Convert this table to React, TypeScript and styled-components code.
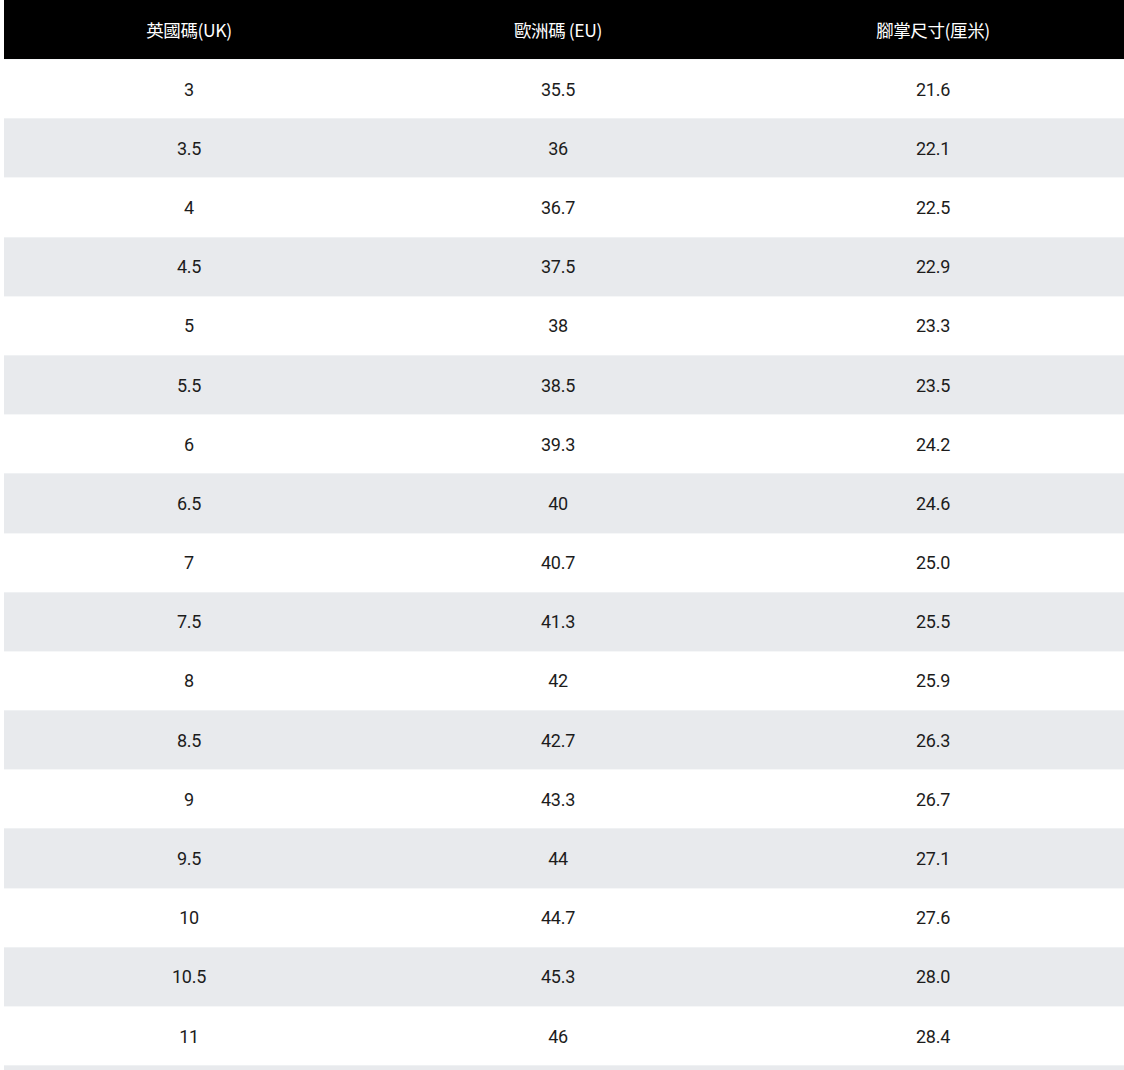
import React from "react";
import styled, { createGlobalStyle } from "styled-components";

const Global = createGlobalStyle`
  html, body { margin: 0; padding: 0; background: #ffffff; }
  body { font-family: Roboto, "Noto Sans CJK TC", "Noto Sans", sans-serif; }
`;

const Page = styled.div`
  padding-left: 4px;
  width: 1120px;
  height: 1070px;
  overflow: hidden;
`;

const Table = styled.div`
  display: flex;
  flex-direction: column;
`;

const HeaderRow = styled.div`
  display: grid;
  grid-template-columns: 370px 368px 1fr;
  height: 59px;
  background: #000000;
  color: #ffffff;
  align-items: center;
`;

const HeaderCell = styled.div`
  text-align: center;
  font-family: "Noto Sans CJK TC", "Noto Sans CJK SC", Roboto, sans-serif;
  font-size: 17.5px;
  font-weight: 400;
  letter-spacing: -0.4px;
  padding-bottom: 1px;
`;

const Row = styled.div<{ $shade: boolean }>`
  display: grid;
  grid-template-columns: 370px 368px 1fr;
  height: 59.2px;
  align-items: center;
  background: ${(p) => (p.$shade ? "#e8eaed" : "#ffffff")};
  border-top: 1px solid ${(p) => (p.$shade ? "#eff1f3" : "#f6f7f8")};
  box-sizing: border-box;
`;

const Cell = styled.div`
  text-align: center;
  font-family: Roboto, "Noto Sans", sans-serif;
  font-size: 18px;
  color: #1c1c1c;
  letter-spacing: -0.3px;
`;

const rows: [string, string, string][] = [
  ["3", "35.5", "21.6"],
  ["3.5", "36", "22.1"],
  ["4", "36.7", "22.5"],
  ["4.5", "37.5", "22.9"],
  ["5", "38", "23.3"],
  ["5.5", "38.5", "23.5"],
  ["6", "39.3", "24.2"],
  ["6.5", "40", "24.6"],
  ["7", "40.7", "25.0"],
  ["7.5", "41.3", "25.5"],
  ["8", "42", "25.9"],
  ["8.5", "42.7", "26.3"],
  ["9", "43.3", "26.7"],
  ["9.5", "44", "27.1"],
  ["10", "44.7", "27.6"],
  ["10.5", "45.3", "28.0"],
  ["11", "46", "28.4"],
];

export default function App() {
  return (
    <>
      <Global />
      <Page>
        <Table>
          <HeaderRow>
            <HeaderCell>英國碼(UK)</HeaderCell>
            <HeaderCell>歐洲碼 (EU)</HeaderCell>
            <HeaderCell>腳掌尺寸(厘米)</HeaderCell>
          </HeaderRow>
          {rows.map((r, i) => (
            <Row key={i} $shade={i % 2 === 1}>
              <Cell>{r[0]}</Cell>
              <Cell>{r[1]}</Cell>
              <Cell>{r[2]}</Cell>
            </Row>
          ))}
          <Row $shade={true} />
        </Table>
      </Page>
    </>
  );
}
